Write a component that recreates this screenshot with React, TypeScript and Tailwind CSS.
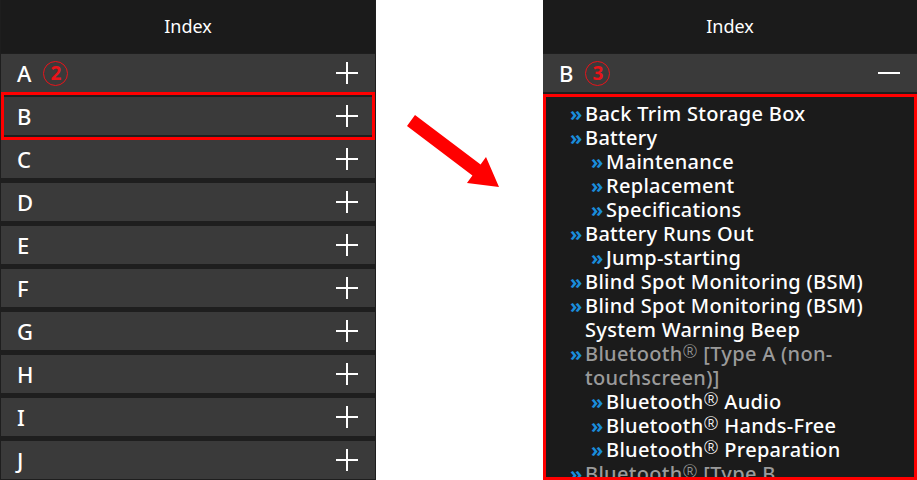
const letters = ["A", "B", "C", "D", "E", "F", "G", "H", "I", "J"];

type Entry = { text: React.ReactNode; level: number; muted?: boolean };

function Reg() {
  return <sup className="relative -top-[3px] text-[18px] font-light leading-none">®</sup>;
}

const entries: Entry[] = [
  { text: "Back Trim Storage Box", level: 0 },
  { text: "Battery", level: 0 },
  { text: "Maintenance", level: 1 },
  { text: "Replacement", level: 1 },
  { text: "Specifications", level: 1 },
  { text: "Battery Runs Out", level: 0 },
  { text: "Jump-starting", level: 1 },
  { text: "Blind Spot Monitoring (BSM)", level: 0 },
  { text: "Blind Spot Monitoring (BSM) System Warning Beep", level: 0 },
  { text: <>Bluetooth<Reg /> [Type A (non-touchscreen)]</>, level: 0, muted: true },
  { text: <>Bluetooth<Reg /> Audio</>, level: 1 },
  { text: <>Bluetooth<Reg /> Hands-Free</>, level: 1 },
  { text: <>Bluetooth<Reg /> Preparation</>, level: 1 },
  { text: <>Bluetooth<Reg /> [Type B (touchscreen)]</>, level: 0, muted: true },
];

function Plus() {
  return (
    <svg width="22" height="22" viewBox="0 0 22 22">
      <path d="M11 0v22M0 11h22" stroke="white" strokeWidth="2" />
    </svg>
  );
}

function Minus() {
  return (
    <svg width="22" height="22" viewBox="0 0 22 22">
      <path d="M0 11h22" stroke="white" strokeWidth="2" />
    </svg>
  );
}

function Circled({ n }: { n: string }) {
  return (
    <span className="ml-3 flex h-[25px] w-[25px] items-center justify-center rounded-full border-[1.5px] border-[#e8141a] text-[19px] font-bold leading-none text-[#e8141a]">
      {n}
    </span>
  );
}

function Header() {
  return (
    <div className="flex h-[53px] items-center justify-center bg-[#1b1b1b] text-[18px] text-white">
      Index
    </div>
  );
}

export default function App() {
  return (
    <div
      className="flex h-[480px] w-[917px] overflow-hidden bg-white"
      style={{ fontFamily: '"Noto Sans", sans-serif' }}
    >
      {/* left: collapsed list */}
      <div className="flex w-[376px] flex-col bg-[#1e1e1e] px-[1px]">
        <Header />
        <div className="flex flex-col gap-[5px] pt-[1px]">
          {letters.map((l) => (
            <div
              key={l}
              className="relative flex h-[38px] shrink-0 items-center bg-[#3a3a3a] pl-4 pr-[17px] text-[22px] font-medium text-white"
            >
              <span>{l}</span>
              {l === "A" && <Circled n="2" />}
              <span className="ml-auto">
                <Plus />
              </span>
              {l === "B" && (
                <div className="absolute inset-x-0 -inset-y-[5px] border-[3px] border-[#ff0000]" />
              )}
            </div>
          ))}
        </div>
      </div>

      {/* arrow */}
      <div className="w-[167px] shrink-0">
        <svg width="167" height="480" viewBox="0 0 167 480">
          <polygon
            points="39,115 104.6,164.6 110,157 123,187 91,183 96.4,175.4 31,126"
            fill="#ff0000"
          />
        </svg>
      </div>

      {/* right: expanded B */}
      <div className="flex w-[374px] flex-col bg-[#1e1e1e]">
        <Header />
        <div className="mt-[1px] flex h-[38px] shrink-0 items-center bg-[#3a3a3a] pl-4 pr-[17px] text-[22px] font-medium text-white">
          <span>B</span>
          <Circled n="3" />
          <span className="ml-auto">
            <Minus />
          </span>
        </div>
        <div className="mt-[2px] flex-1 overflow-hidden border-[3px] border-[#ff0000] bg-[#1b1b1b] pr-3 pt-[5px] pl-6">
          {entries.map((e, i) => (
            <div
              key={i}
              className={`flex text-[20px] font-medium leading-[24px] tracking-[0.3px] ${e.level === 1 ? "pl-[21px]" : ""}`}
            >
              <span className="w-[15px] shrink-0 font-bold text-[#1a8ddb]">»</span>
              <span className={e.muted ? "text-[#9a9a9a]" : "text-white"}>{e.text}</span>
            </div>
          ))}
        </div>
      </div>
    </div>
  );
}
